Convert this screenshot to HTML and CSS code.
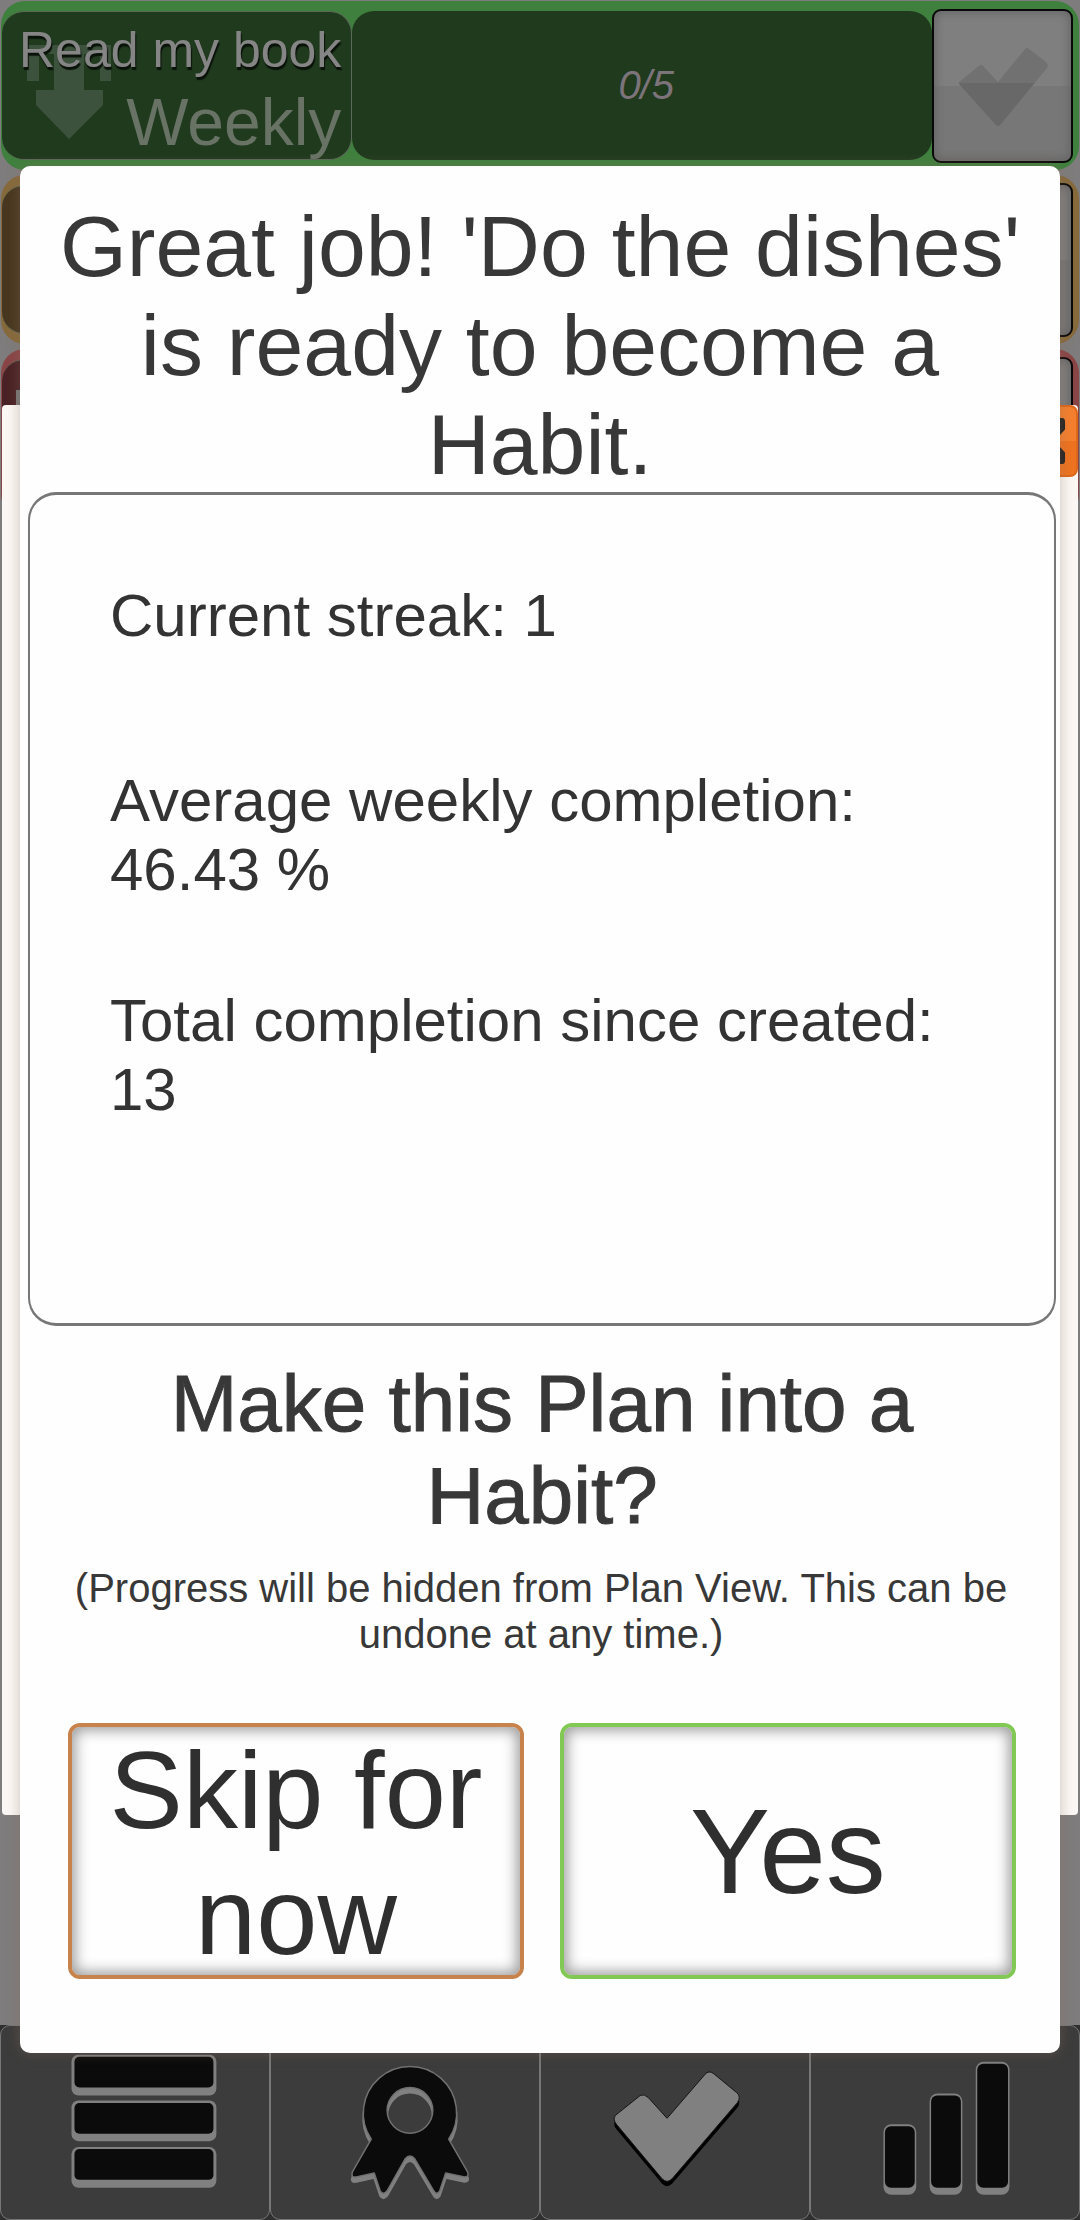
FILE: index.html
```html
<!DOCTYPE html>
<html lang="en">
<head>
<meta charset="utf-8">
<meta name="viewport" content="width=device-width, initial-scale=1">
<title>Plans</title>
<link rel="stylesheet" href="styles.css">
</head>
<body>
<div class="app">
  <main class="plans">
    <article class="plan plan-green">
      <div class="plan-name">
        <svg class="plan-arrow" viewBox="0 0 84 94" aria-hidden="true"><path d="M0 0H84V36H73V9H57V45H76V60L42 94L9 60V45H27V9H12V36H0Z"/></svg>
        <span class="plan-title">Read my book</span>
        <span class="plan-period">Weekly</span>
      </div>
      <div class="plan-track"><span class="plan-count">0/5</span></div>
      <button class="plan-check" type="button" aria-label="Complete Read my book">
        <svg viewBox="0 0 90 80" aria-hidden="true"><defs><linearGradient id="tick" x2="0" y2="1"><stop offset=".45" stop-color="#717171"/><stop offset=".45" stop-color="#686868"/></linearGradient></defs><path fill="url(#tick)" d="M1 34L22 17Q24 16 26 19L40 34L67 1Q69-1 71 1L88 14Q91 17 89 20L43 76Q40 80 37 76L1 36Z"/></svg>
      </button>
    </article>
    <article class="plan plan-amber">
      <div class="plan-name"></div>
      <div class="plan-track"></div>
      <button class="plan-check" type="button" aria-label="Complete plan"></button>
    </article>
    <article class="plan plan-red">
      <div class="plan-name"><span class="plan-stem"></span></div>
      <div class="plan-track"></div>
      <button class="plan-check" type="button" aria-label="Complete plan"></button>
    </article>
  </main>

  <nav class="tabs">
    <button class="tab" type="button" aria-label="Menu">
      <svg viewBox="0 0 270 194">
        <g fill="#808080"><rect x="71" y="29" width="146" height="41" rx="7"/><rect x="71" y="75" width="146" height="41" rx="7"/><rect x="71" y="122" width="146" height="41" rx="7"/></g>
        <g fill="#0b0b0b"><rect x="74" y="31" width="140" height="31" rx="5"/><rect x="74" y="77.500" width="140" height="31" rx="5"/><rect x="74" y="124" width="140" height="31" rx="5"/></g>
      </svg>
    </button>
    <button class="tab" type="button" aria-label="Awards">
      <svg viewBox="0 0 270 194">
        <defs><path id="award" fill-rule="evenodd" d="M101 114A47 47 0 1 1 179 114L198 147Q200 152 195 152L176 148L170 166Q167 171 164 166L145 134Q140 128 135 134L117 166Q113 171 110 166L104 148L86 152Q80 153 82 147ZM140 62A23 23 0 1 0 140 108A23 23 0 1 0 140 62Z"/></defs>
        <use href="#award" y="5" fill="#808080" stroke="#808080" stroke-width="2" stroke-linejoin="round"/>
        <use href="#award" fill="#0b0b0b" stroke="#707070" stroke-width="1.500" stroke-linejoin="round"/>
      </svg>
    </button>
    <button class="tab" type="button" aria-label="Plans">
      <svg viewBox="0 0 270 194">
        <defs><path id="done" d="M75 90L100 70Q104 68 108 72L127 93L165 49Q169 44 174 48L197 67Q202 71 198 77L132 154Q127 159 122 154L76 99Q72 94 75 90Z"/></defs>
        <use href="#done" y="5" fill="#000"/>
        <use href="#done" fill="#808080" stroke="#151515" stroke-width="1"/>
      </svg>
    </button>
    <button class="tab" type="button" aria-label="Statistics">
      <svg viewBox="0 0 270 194">
        <g fill="#808080"><rect x="73" y="99" width="33" height="71" rx="8"/><rect x="119.500" y="68" width="33" height="102" rx="8"/><rect x="166" y="36" width="34" height="134" rx="8"/></g>
        <g fill="#0b0b0b"><rect x="74.500" y="101" width="30" height="62" rx="6"/><rect x="121" y="70" width="30" height="93" rx="6"/><rect x="167.500" y="38" width="31" height="125" rx="6"/></g>
      </svg>
    </button>
  </nav>

  <div class="sheet">
    <button class="sheet-close" type="button" aria-label="Close">
      <svg viewBox="0 0 50 50" aria-hidden="true"><path d="M1 1H9L25 18L41 1H46Q49 1 49 5V13L38 25L49 37V45Q49 49 46 49H41L25 32L9 49H1V39L15 25L1 11Z"/></svg>
    </button>
  </div>

  <section class="dialog" role="dialog" aria-labelledby="dialog-title">
    <h1 class="dialog-title" id="dialog-title">Great job! 'Do the dishes' is ready to become a Habit.</h1>
    <div class="stats">
      <p class="stat">Current streak: 1</p>
      <p class="stat">Average weekly completion: 46.43 %</p>
      <p class="stat">Total completion since created: 13</p>
    </div>
    <h2 class="question">Make this Plan into a Habit?</h2>
    <p class="note">(Progress will be hidden from Plan View. This can be undone at any time.)</p>
    <div class="actions">
      <button class="action action-skip" type="button">Skip for now</button>
      <button class="action action-yes" type="button">Yes</button>
    </div>
  </section>
</div>
</body>
</html>
```
FILE: styles.css
```css
* {
  box-sizing: border-box;
}

body {
  margin: 0;
  font-family: "Liberation Sans", Arial, sans-serif;
  color: #333;
  background: #7e7c7c;
}

button {
  margin: 0;
  padding: 0;
  font: inherit;
  color: inherit;
}

svg {
  display: block;
}

.app {
  position: relative;
  display: flex;
  flex-direction: column;
  justify-content: space-between;
  min-height: 100vh;
  overflow: hidden;
}

/* Plan list, dimmed behind the dialogs */
.plans {
  display: flex;
  flex-direction: column;
  gap: 5px;
  padding: 1px;
}

.plan {
  display: grid;
  grid-template-columns: 350fr 579fr 141px;
  align-items: center;
  height: 169px;
  padding: 0 6px 0 1px;
  border-radius: 24px;
}

.plan-green {
  --panel: #203a1e;
  background: #3f803e;
}

.plan-amber {
  --panel: #483720;
  background: #866a3c;
}

.plan-red {
  --panel: #4a2226;
  background: #8a4547;
}

.plan-name,
.plan-track {
  display: flex;
  min-width: 0;
  height: 149px;
  background: var(--panel);
  border-radius: 22px;
}

.plan-name {
  position: relative;
  flex-direction: column;
  align-items: flex-end;
  padding: 10px 10px 0 0;
  border: 1px solid #5a6a56;
  border-width: 1px 1px 1px 0;
  white-space: nowrap;
}

.plan-track {
  align-items: center;
  justify-content: center;
  padding-left: 8px;
}

.plan-arrow {
  position: absolute;
  left: 25px;
  top: 33px;
  width: 84px;
  fill: #3d523c;
}

.plan-title {
  position: relative;
  font-size: 50px;
  line-height: 56px;
  color: #858585;
  text-shadow: 1px 3px 1px #0a120a;
}

.plan-period {
  position: relative;
  font-size: 66px;
  line-height: 88px;
  color: #687366;
}

.plan-count {
  font-size: 40px;
  font-style: italic;
  color: #7d747b;
}

.plan-stem {
  align-self: flex-start;
  width: 4px;
  height: 40px;
  margin: 20px 0 0 14px;
  background: #777;
}

.plan-check {
  display: grid;
  place-items: center;
  width: 141px;
  height: 154px;
  border: 2px solid #080808;
  border-radius: 9px;
  background: linear-gradient(#7f7f7f 50%, #777 50%);
  box-shadow: inset 0 0 8px 2px #666;
}

.plan-check svg {
  width: 90px;
  margin-top: 4px;
}

/* Bottom tab bar */
.tabs {
  display: grid;
  grid-template-columns: repeat(4, 1fr);
  background: #2f2f2f;
}

.tab {
  border: 1px solid #777;
  border-radius: 10px;
  background: #3c3c3c;
}

.tab svg {
  width: 100%;
}

/* Card waiting beneath the dialog */
.sheet {
  position: absolute;
  inset: 405px 2px;
  display: flex;
  justify-content: flex-end;
  align-items: flex-start;
  border-radius: 4px;
  background: #fbf7f4;
}

.sheet-close {
  display: grid;
  place-items: center;
  width: 72px;
  height: 72px;
  border: 2px solid #dd681c;
  border-radius: 8px;
  background: linear-gradient(#f47f2e 50%, #ee7320 50%);
}

.sheet-close svg {
  width: 48px;
  fill: #222;
}

/* Habit dialog */
.dialog {
  position: absolute;
  inset: 166px 20px auto;
  padding: 31px 4px 74px 8px;
  border-radius: 10px;
  background: #fefefe;
  box-shadow: 0 0 14px rgba(140, 110, 90, 0.4);
  text-align: center;
}

.dialog-title,
.question,
.note,
.stat {
  margin: 0;
  font-weight: normal;
}

.dialog-title {
  padding-right: 4px;
  font-size: 86px;
  line-height: 99px;
  color: #383838;
}

.stats {
  display: grid;
  grid-auto-rows: 220px;
  align-items: center;
  margin-top: -2px;
  padding: 10px 80px 158px;
  border: solid #777;
  border-width: 3px 2px;
  border-radius: 28px;
  text-align: left;
}

.stat {
  font-size: 60px;
  line-height: 69px;
}

.question {
  margin-top: 32px;
  padding: 0 80px;
  font-size: 80px;
  line-height: 92px;
  color: #383838;
  -webkit-text-stroke: 1px #383838;
}

.note {
  margin-top: 23px;
  padding: 0 26px 0 24px;
  font-size: 40px;
  line-height: 46px;
  color: #383838;
}

.actions {
  display: grid;
  grid-template-columns: 1fr 1fr;
  gap: 36px;
  margin-top: 66px;
  padding: 0 40px;
}

.action {
  height: 256px;
  border: 4px solid;
  border-radius: 12px;
  background: #fefefe;
  box-shadow: inset 0 0 14px 3px #999;
  color: #2f2f2f;
}

.action-skip {
  border-color: #c8834c;
  font-size: 110px;
  line-height: 126px;
}

.action-yes {
  border-color: #82c854;
  font-size: 120px;
  line-height: 138px;
}
```
